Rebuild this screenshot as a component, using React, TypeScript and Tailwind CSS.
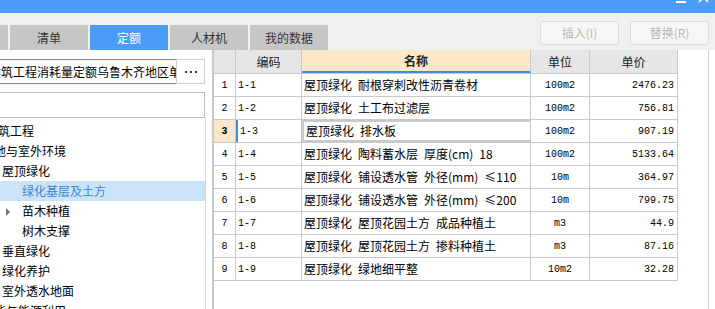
import { FC } from 'react';

interface RowProps {
	no: number,
	code: string,
	name: string,
	unit: string,
	price: string
}

const rows: RowProps[] = [
	{ no: 1, code: '1-1', name: '屋顶绿化 耐根穿刺改性沥青卷材', unit: '100m2', price: '2476.23' },
	{ no: 2, code: '1-2', name: '屋顶绿化 土工布过滤层', unit: '100m2', price: '756.81' },
	{ no: 3, code: '1-3', name: '屋顶绿化 排水板', unit: '100m2', price: '907.19' },
	{ no: 4, code: '1-4', name: '屋顶绿化 陶料蓄水层 厚度(cm) 18', unit: '100m2', price: '5133.64' },
	{ no: 5, code: '1-5', name: '屋顶绿化 铺设透水管 外径(mm) ≤110', unit: '10m', price: '364.97' },
	{ no: 6, code: '1-6', name: '屋顶绿化 铺设透水管 外径(mm) ≤200', unit: '10m', price: '799.75' },
	{ no: 7, code: '1-7', name: '屋顶绿化 屋顶花园土方 成品种植土', unit: 'm3', price: '44.9' },
	{ no: 8, code: '1-8', name: '屋顶绿化 屋顶花园土方 掺料种植土', unit: 'm3', price: '87.16' },
	{ no: 9, code: '1-9', name: '屋顶绿化 绿地细平整', unit: '10m2', price: '32.28' },
];

const cjk = "font-['Noto_Sans_CJK_SC','Noto_Sans',sans-serif]";
const mono = "font-['Liberation_Mono','Noto_Sans_CJK_SC',monospace]";

const Tabs: FC = () => {
	const tabs = ['清单', '定额', '人材机', '我的数据'];
	return (
		<div className="flex items-end gap-[2px] h-[25px]">
			<div className="w-[8px] h-[25px] bg-[#c6c6c6]" />
			{tabs.map((t) => (
				<div key={t} className={'w-[78px] h-[25px] flex items-center justify-center text-[12px] ' + (t === '定额' ? 'bg-[#4a9cf6] text-white' : 'bg-[#c6c6c6] text-[#333]')}>
					{t}
				</div>
			))}
		</div>
	);
};

const Tree: FC = () => {
	const items = [
		{ text: '建筑工程', cls: 'ml-[-14px]' },
		{ text: '绿地与室外环境', cls: 'ml-[-18px]' },
		{ text: '屋顶绿化', cls: 'ml-[2px]' },
		{ text: '绿化基层及土方', cls: 'ml-[22px]', active: true },
		{ text: '苗木种植', cls: 'ml-[22px]', arrow: true },
		{ text: '树木支撑', cls: 'ml-[22px]' },
		{ text: '垂直绿化', cls: 'ml-[2px]' },
		{ text: '绿化养护', cls: 'ml-[2px]' },
		{ text: '室外透水地面', cls: 'ml-[2px]' },
		{ text: '节能与能源利用', cls: 'ml-[-18px]' },
	];
	return (
		<div className="w-[206px] flex-1 border-r border-[#d8d8d8] pt-[3px] overflow-hidden">
			{items.map((it) => (
				<div key={it.text} className={'relative h-[20px] flex items-center text-[12px] whitespace-nowrap ' + (it.active ? 'bg-[#cce4f9] text-[#3a86d8]' : 'text-black')}>
					{it.arrow ? (
						<div className="absolute left-[6px] top-[7px] w-0 h-0 border-y-[4px] border-y-transparent border-l-[4px] border-l-[#777]" />
					) : null}
					<span className={it.cls}>{it.text}</span>
				</div>
			))}
		</div>
	);
};

const Table: FC = () => {
	const cell = 'h-full border-r border-[#c9c9c9] flex items-center shrink-0';
	return (
		<div className="w-[465px] border-l border-[#c9c9c9]">
			<div className="flex h-[24px] border-b border-[#c9c9c9] text-[12px] text-[#222]">
				<div className={cell + ' w-[22px] bg-[#e6e6e6]'} />
				<div className={cell + ' w-[66px] bg-[#e6e6e6] justify-center'}>编码</div>
				<div className={cell + ' w-[229px] bg-[#fde6c9] justify-center font-bold border-b-2 border-b-[#3b8de8]'}>名称</div>
				<div className={cell + ' w-[59px] bg-[#e6e6e6] justify-center'}>单位</div>
				<div className={cell + ' w-[88px] bg-[#e6e6e6] justify-center'}>单价</div>
			</div>
			{rows.map((r) => {
				const sel = r.no === 3;
				return (
					<div key={r.no} className="flex h-[23px] border-b border-[#c9c9c9] text-[12px] text-black">
						<div className={cell + ' w-[22px] justify-center text-[10px] ' + mono + (sel ? ' bg-[#fde6c9] font-bold' : '')}>{r.no}</div>
						<div className={cell + ' w-[66px] pl-[2px] text-[10px] ' + mono + (sel ? ' border-l-2 border-l-[#3b8de8] pl-0' : '')}>{r.code}</div>
						<div className={cell + ' w-[229px] pl-[2px] whitespace-pre overflow-hidden' + (sel ? ' border-2 border-[#3b8de8] pl-[1px]' : '')}>{r.name.split(' ').join('\u2002')}</div>
						<div className={cell + ' w-[59px] justify-center text-[10px] ' + mono}>{r.unit}</div>
						<div className={cell + ' w-[88px] justify-end pr-[3px] text-[10px] ' + mono}>{r.price}</div>
					</div>
				);
			})}
		</div>
	);
};

const App: FC = () => {
	return (
		<div className={'w-[715px] h-[309px] bg-[#f0f0f0] overflow-hidden flex flex-col ' + cjk}>
			<div className="relative h-[13px] bg-[#4a9cf6] overflow-hidden">
				<div className="absolute left-[676px] top-[1px] w-[10px] h-[2px] bg-white" />
				<svg className="absolute left-[698px] top-[-8px]" width="11" height="11" viewBox="0 0 11 11" stroke="white" strokeWidth="1.6">
					<line x1="1" y1="1" x2="10" y2="10" />
					<line x1="10" y1="1" x2="1" y2="10" />
				</svg>
			</div>
			<div className="h-[37px] flex items-end relative">
				<Tabs />
				<div className="absolute right-[6px] top-[8px] flex gap-[11px]">
					<div className="w-[79px] h-[24px] rounded-[3px] border border-[#dcdcdc] bg-[#f7f7f7] flex items-center justify-center text-[12px] text-[#b8b8b8]">插入(I)</div>
					<div className="w-[79px] h-[24px] rounded-[3px] border border-[#dcdcdc] bg-[#f7f7f7] flex items-center justify-center text-[12px] text-[#b8b8b8]">替换(R)</div>
				</div>
			</div>
			<div className="flex flex-1 min-h-0">
				<div className="w-[212px] shrink-0 bg-white flex flex-col pt-[9px] overflow-hidden">
					<div className="flex h-[25px] shrink-0">
						<div className="w-[176px] shrink-0 h-full border-y border-[#4a9cf6] flex items-center overflow-hidden text-[12px] text-black whitespace-nowrap">
							<span className="ml-[-11px]">建筑工程消耗量定额乌鲁木齐地区单价</span>
						</div>
						<div className="w-[29px] shrink-0 h-full border border-[#cfcfcf] flex items-center justify-center gap-[3px]">
							<div className="w-[2px] h-[2px] bg-[#333]" />
							<div className="w-[2px] h-[2px] bg-[#333]" />
							<div className="w-[2px] h-[2px] bg-[#333]" />
						</div>
					</div>
					<div className="mt-[8px] w-[205px] h-[26px] border border-[#bdbdbd] border-l-0 shrink-0" />
					<Tree />
				</div>
				<div className="flex-1 bg-white flex border-l border-[#c9c9c9]">
					<Table />
					<div className="w-[31px] border-r border-[#cfcfcf]" />
				</div>
			</div>
		</div>
	);
};

export default App;
